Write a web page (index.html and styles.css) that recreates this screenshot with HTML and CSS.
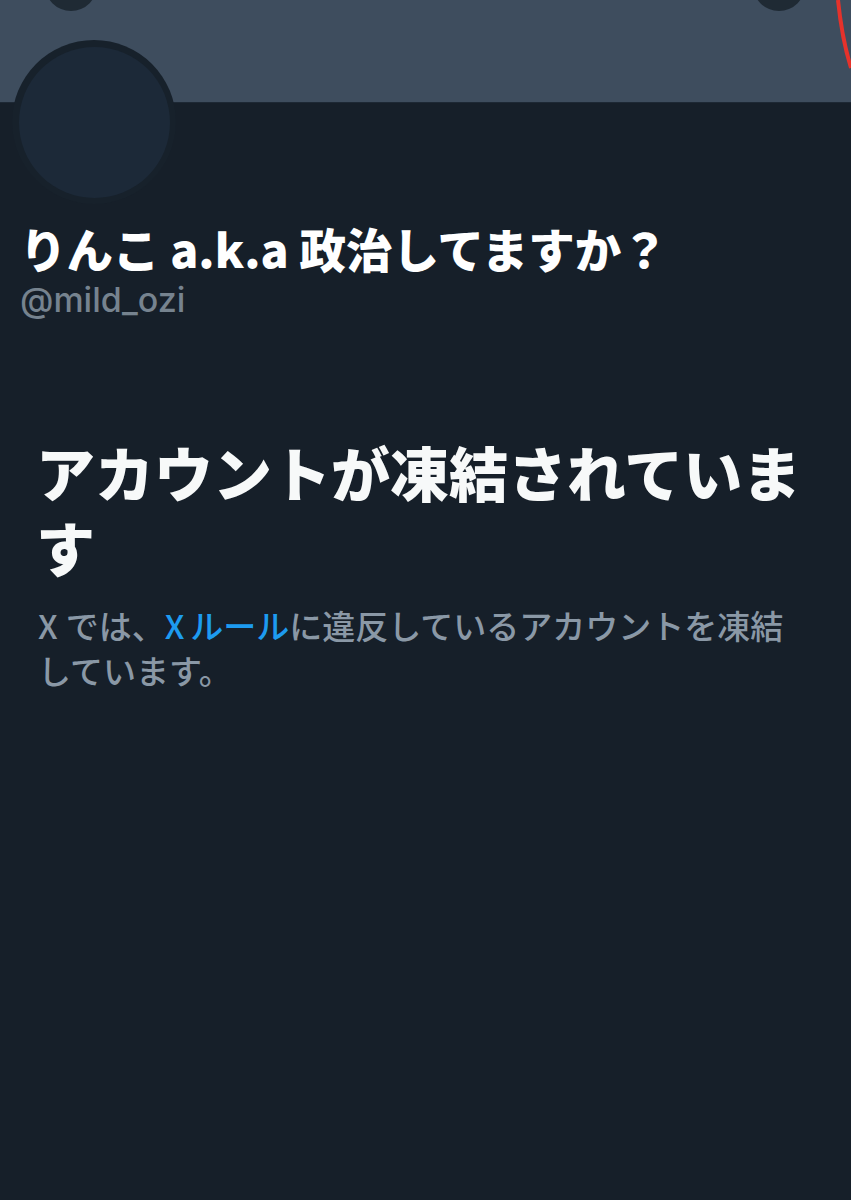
FILE: index.html
```html
<!DOCTYPE html>
<html lang="ja">
<head>
<meta charset="utf-8">
<title>アカウントが凍結されています</title>
<link rel="stylesheet" href="styles.css">
</head>
<body>
<div class="page">
  <header class="banner">
    <span class="nav-btn nav-left"></span>
    <span class="nav-btn nav-right"></span>
    <svg class="red-mark" width="20" height="80" viewBox="0 0 20 80">
      <path d="M7 0 C 9 20, 12 42, 20 68" stroke="#e6322b" stroke-width="4" fill="none"/>
    </svg>
    <div class="avatar"><div class="avatar-inner"></div></div>
  </header>
  <section class="profile">
    <h1 class="name">りんこ a.k.a 政治してますか？</h1>
    <div class="handle">@mild_ozi</div>
  </section>
  <section class="notice">
    <h2 class="notice-title">アカウントが凍結されています</h2>
    <p class="notice-text"><span class="x">X</span>では、<a class="link" href="#"><span class="x x-link">X</span>ルール</a>に違反しているアカウントを凍結しています。</p>
  </section>
</div>
</body>
</html>
```

FILE: styles.css
```css
html, body {
  margin: 0;
  padding: 0;
  background: #161f29;
}
body {
  font-family: "Noto Sans CJK JP", "Noto Sans", sans-serif;
  color: #ffffff;
}
.page {
  width: 851px;
  min-height: 1200px;
  background: #161f29;
  overflow: hidden;
}
.banner {
  position: relative;
  height: 103px;
  background: #3e4d5e;
  border-bottom: 1px solid #1d2834;
  box-sizing: border-box;
}
.nav-btn {
  position: absolute;
  top: -41px;
  width: 52px;
  height: 52px;
  border-radius: 50%;
  background: #1f2a34;
}
.nav-left { left: 45px; }
.nav-right { left: 753px; }
.red-mark {
  position: absolute;
  top: 0;
  right: 0;
}
.avatar {
  position: absolute;
  left: 12px;
  top: 40px;
  width: 164px;
  height: 164px;
  border-radius: 50%;
  background: #17212b;
  display: flex;
  align-items: center;
  justify-content: center;
}
.avatar-inner {
  width: 151px;
  height: 151px;
  border-radius: 50%;
  background: #1c2938;
}
.profile {
  padding: 117px 20px 0 20px;
}
.name {
  margin: 0;
  font-size: 46.5px;
  line-height: 56px;
  font-weight: 900;
  color: #ffffff;
  white-space: nowrap;
}
.handle {
  margin-top: 3px;
  font-family: "Inter", "Liberation Sans", sans-serif;
  font-size: 34px;
  line-height: 42px;
  font-weight: 500;
  color: #76838f;
}
.notice {
  padding: 113px 38px 0 38px;
}
.notice-title {
  margin: 0 0 0 -2px;
  font-size: 59px;
  line-height: 75px;
  font-weight: 900;
  color: #f7f9f9;
}
.notice-text {
  margin: 19px 0 0 0;
  font-size: 33px;
  line-height: 45px;
  font-weight: 500;
  color: #8a98a6;
}
.x {
  margin-right: 8px;
}
.x-link {
  margin-right: 6px;
}
.link {
  color: #1d9bf0;
  text-decoration: none;
}
```
